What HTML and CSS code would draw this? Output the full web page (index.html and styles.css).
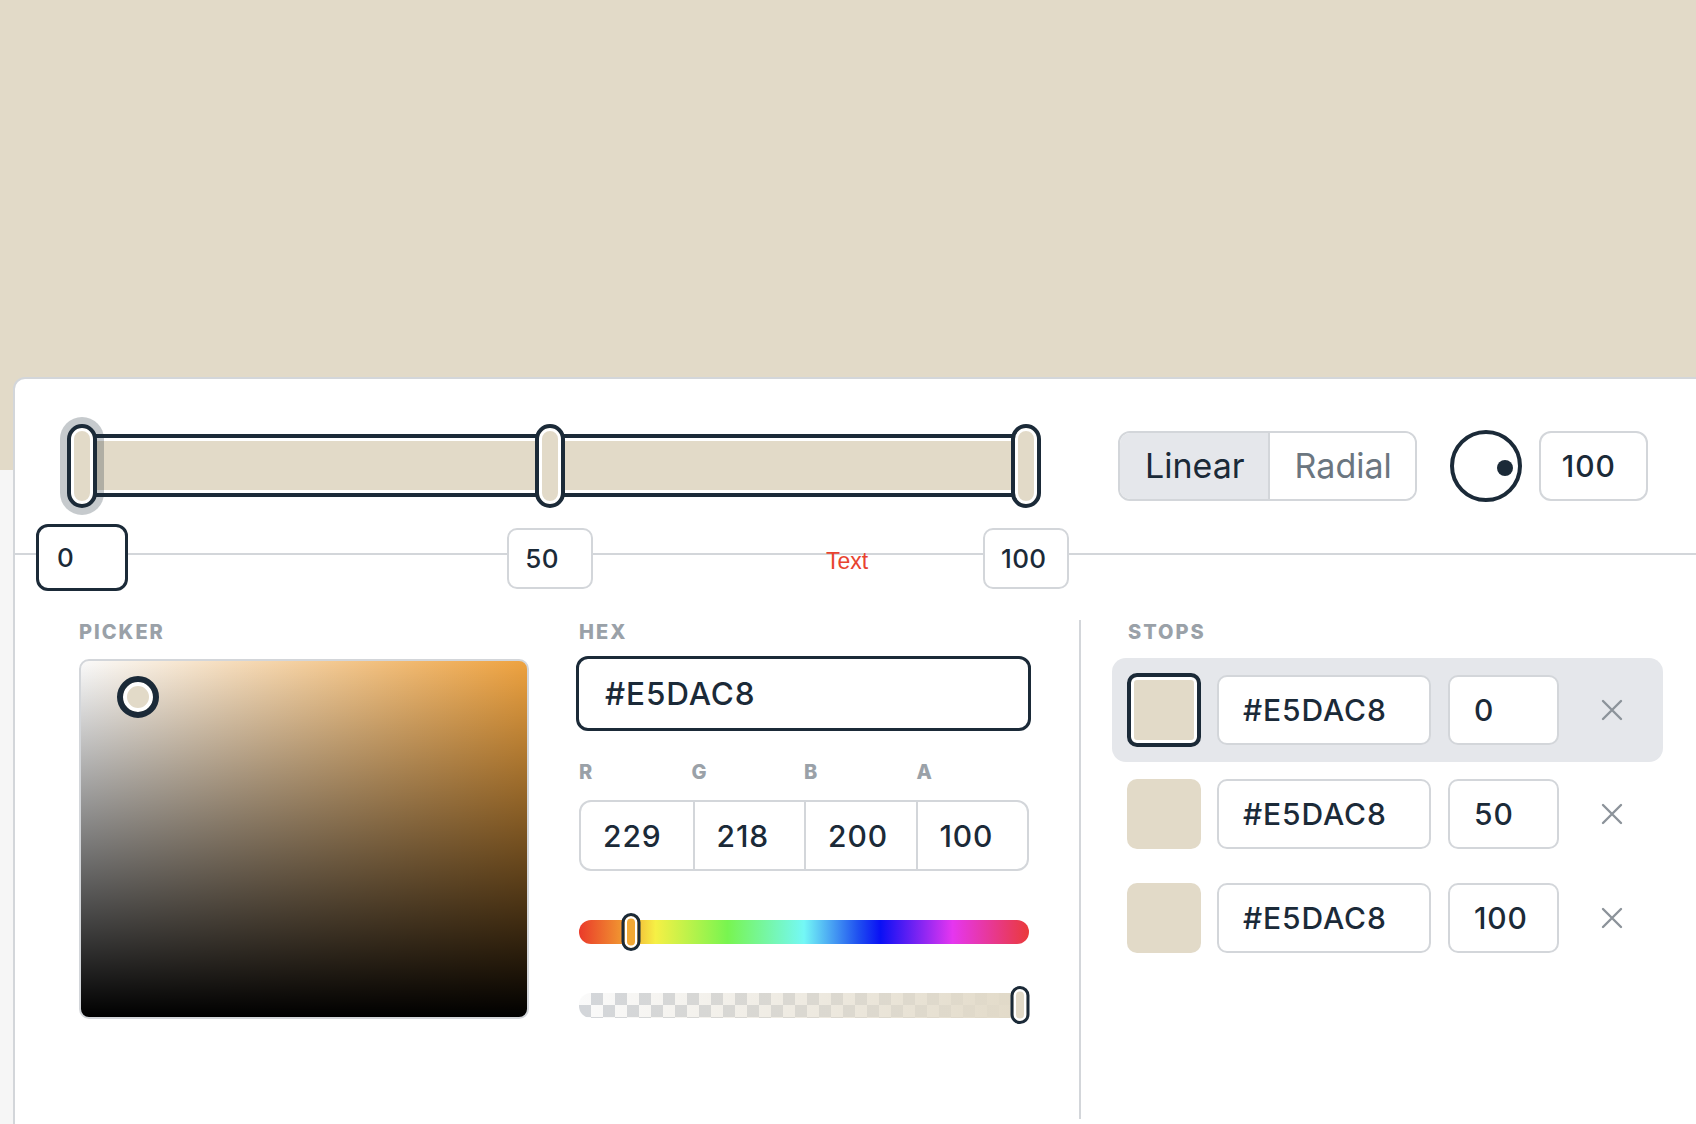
FILE: index.html
```html
<!DOCTYPE html>
<html lang="en">
<head>
<meta charset="utf-8">
<title>Gradient editor</title>
<link rel="stylesheet" href="styles.css">
</head>
<body>
<div class="card">
  <div class="top">
    <div class="editor">
      <div class="track"></div>
      <div class="handle is-focused" style="left:0%"></div>
      <div class="handle" style="left:49.6%"></div>
      <div class="handle" style="left:100%"></div>
      <div class="stop-num is-focused" style="left:0%">0</div>
      <div class="stop-num" style="left:49.6%">50</div>
      <div class="stop-num" style="left:100%">100</div>
      <span class="stray">Text</span>
    </div>
    <div class="seg">
      <div class="seg-item is-active">Linear</div>
      <div class="seg-item">Radial</div>
    </div>
    <div class="dial"><span class="dial-dot"></span></div>
    <div class="field angle">100</div>
  </div>

  <div class="bottom">
    <div class="picker-col">
      <div class="label">PICKER</div>
      <div class="sv">
        <span class="sv-cursor"></span>
      </div>
    </div>

    <div class="mid-col">
      <div class="label indent">HEX</div>
      <div class="hex-input">#E5DAC8</div>
      <div class="rgba-labels">
        <span class="label">R</span>
        <span class="label">G</span>
        <span class="label">B</span>
        <span class="label">A</span>
      </div>
      <div class="rgba">
        <div class="rgba-cell">229</div>
        <div class="rgba-cell">218</div>
        <div class="rgba-cell">200</div>
        <div class="rgba-cell">100</div>
      </div>
      <div class="hue">
        <span class="slider-handle hue-handle" style="left:11.6%"></span>
      </div>
      <div class="alpha">
        <span class="slider-handle alpha-handle" style="left:97.9%"></span>
      </div>
    </div>

    <div class="vdivider"></div>

    <div class="stops-col">
      <div class="label stops-label">STOPS</div>
      <div class="stop-row is-active">
        <div class="swatch is-active"></div>
        <div class="field hex">#E5DAC8</div>
        <div class="field pos">0</div>
        <svg class="remove" width="22" height="22" viewBox="0 0 22 22" fill="none" stroke="#8c939a" stroke-width="2.4" stroke-linecap="round"><path d="M2 2 L20 20 M20 2 L2 20"/></svg>
      </div>
      <div class="stop-row">
        <div class="swatch"></div>
        <div class="field hex">#E5DAC8</div>
        <div class="field pos">50</div>
        <svg class="remove" width="22" height="22" viewBox="0 0 22 22" fill="none" stroke="#8c939a" stroke-width="2.4" stroke-linecap="round"><path d="M2 2 L20 20 M20 2 L2 20"/></svg>
      </div>
      <div class="stop-row">
        <div class="swatch"></div>
        <div class="field hex">#E5DAC8</div>
        <div class="field pos">100</div>
        <svg class="remove" width="22" height="22" viewBox="0 0 22 22" fill="none" stroke="#8c939a" stroke-width="2.4" stroke-linecap="round"><path d="M2 2 L20 20 M20 2 L2 20"/></svg>
      </div>
    </div>
  </div>
</div>
</body>
</html>
```

FILE: styles.css
```css
* { box-sizing: border-box; }

html, body {
  margin: 0;
  padding: 0;
  overflow: hidden;
  height: 1124px;
}

body {
  font-family: Inter, "Noto Sans", sans-serif;
  font-weight: 500;
  color: #1b2a38;
  background: linear-gradient(to bottom, #e2dac8 0, #e2dac8 470px, #f6f6f6 470px, #f6f6f6 100%);
}

.card {
  margin: 377px 0 0 13px;
  width: 1720px;
  background: #fff;
  border: 2px solid #d3d6da;
  border-radius: 12px;
  padding-bottom: 20px;
}

/* ---------- top section ---------- */
.top {
  display: flex;
  align-items: center;
  padding: 45px 0 45px 67px;
  border-bottom: 2px solid #d3d6da;
}

.editor {
  position: relative;
  width: 944px;
  height: 84px;
  flex: none;
}

.track {
  position: absolute;
  left: 0;
  right: 0;
  top: 10px;
  height: 63px;
  background: #e2dac8;
  border: 4px solid #1b2a38;
  box-shadow: inset 0 0 0 3px #fff;
}

.handle {
  position: absolute;
  top: 0;
  width: 30px;
  height: 84px;
  transform: translateX(-50%);
  background: #e2dac8;
  border: 4px solid #1b2a38;
  border-radius: 15px;
  box-shadow: inset 0 0 0 3px #fff;
}

.handle.is-focused {
  box-shadow: inset 0 0 0 3px #fff, 0 0 0 7px rgba(27, 42, 56, 0.25);
}

.stop-num {
  position: absolute;
  top: 104px;
  width: 86px;
  height: 61px;
  transform: translateX(-50%);
  display: flex;
  align-items: center;
  padding-left: 16px;
  background: #fff;
  border: 2px solid #d3d6da;
  border-radius: 10px;
  font-size: 26px;
  letter-spacing: 0.4px;
  line-height: 1;
}

.stop-num.is-focused {
  top: 100px;
  width: 92px;
  height: 67px;
  padding-left: 18px;
  border: 3.5px solid #1b2a38;
  border-radius: 12px;
}

.stray {
  position: absolute;
  left: 744px;
  top: 126px;
  font-family: "Liberation Sans", Arial, sans-serif;
  font-weight: 400;
  font-size: 23px;
  line-height: 23px;
  color: #e8432f;
}

.seg {
  display: flex;
  height: 70px;
  margin-left: 92px;
  border: 2px solid #d3d6da;
  border-radius: 12px;
  overflow: hidden;
  flex: none;
}

.seg-item {
  display: flex;
  align-items: center;
  padding: 0 23px 0 25px;
  font-size: 34px;
  font-weight: 400;
  line-height: 1;
  color: #6b7680;
  background: #fff;
}

.seg-item.is-active {
  background: #e5e7eb;
  color: #1b2a38;
  border-right: 2px solid #d3d6da;
}

.dial {
  position: relative;
  width: 72px;
  height: 72px;
  margin-left: 33px;
  border: 4px solid #1b2a38;
  border-radius: 50%;
  flex: none;
}

.dial-dot {
  position: absolute;
  left: 43px;
  top: 26px;
  width: 16px;
  height: 16px;
  border-radius: 50%;
  background: #1b2a38;
}

.field {
  display: flex;
  align-items: center;
  height: 70px;
  padding-left: 24px;
  background: #fff;
  border: 2px solid #d3d6da;
  border-radius: 10px;
  font-size: 30px;
  letter-spacing: 0.9px;
  line-height: 1;
  flex: none;
}

.angle {
  width: 109px;
  margin-left: 17px;
  padding-left: 21px;
  border-radius: 12px;
}

/* ---------- bottom section ---------- */
.bottom {
  display: flex;
  align-items: flex-start;
  padding: 65px 0 0 64px;
  min-height: 564px;
}

.label {
  font-size: 20px;
  line-height: 24px;
  font-weight: 800;
  letter-spacing: 2px;
  color: #9aa1a8;
}

.label.indent { padding-left: 3px; }

.picker-col {
  width: 450px;
  flex: none;
}

.sv {
  position: relative;
  margin-top: 15px;
  width: 450px;
  height: 360px;
  border: 2px solid #d3d6da;
  border-radius: 10px;
  background:
    linear-gradient(to bottom, rgba(0,0,0,0) 0%, #000 100%),
    linear-gradient(to right, #fafafa 0%, rgba(250,250,250,0) 100%),
    #eea23f;
}

.sv-cursor {
  position: absolute;
  left: 36px;
  top: 15px;
  width: 42px;
  height: 42px;
  border-radius: 50%;
  border: 6px solid #1b2a38;
  background: #e2dac8;
  box-shadow: inset 0 0 0 4px #fff;
}

.mid-col {
  width: 455px;
  margin-left: 47px;
  flex: none;
}

.hex-input {
  display: flex;
  align-items: center;
  margin-top: 12px;
  height: 75px;
  padding-left: 26px;
  border: 3.5px solid #1b2a38;
  border-radius: 12px;
  font-size: 31.5px;
  letter-spacing: 0.9px;
  line-height: 1;
}

.rgba-labels {
  display: grid;
  grid-template-columns: repeat(4, 1fr);
  margin: 29px 0 0 3px;
  width: 450px;
}

.rgba {
  display: grid;
  grid-template-columns: repeat(4, 1fr);
  margin: 16px 0 0 3px;
  width: 450px;
  height: 71px;
  border: 2px solid #d3d6da;
  border-radius: 12px;
  overflow: hidden;
}

.rgba-cell {
  display: flex;
  align-items: center;
  padding-left: 22px;
  font-size: 30px;
  letter-spacing: 0.9px;
  line-height: 1;
  border-left: 2px solid #d3d6da;
}

.rgba-cell:first-child { border-left: 0; }

.hue {
  position: relative;
  margin: 49px 0 0 3px;
  width: 450px;
  height: 24px;
  border-radius: 12px;
  background: linear-gradient(to right,
    #ea3a2a 0%, #f09030 9%, #f6f045 17%, #78f550 33%, #74f8f6 50%,
    #1f50f0 62%, #0a10f5 67%, #e536f0 83%, #ea3a3a 100%);
}

.alpha {
  position: relative;
  margin: 49px 0 0 3px;
  width: 450px;
  height: 25px;
  border-radius: 12px;
  background:
    linear-gradient(to right, rgba(226,218,200,0) 0%, #e2dac8 100%),
    conic-gradient(#d3d6da 25%, #fafafa 0 50%, #d3d6da 0 75%, #fafafa 0) 0 0 / 24px 24px;
}

.slider-handle {
  position: absolute;
  top: -7px;
  width: 19px;
  height: 38px;
  transform: translateX(-50%);
  border: 3.5px solid #1b2a38;
  border-radius: 10px;
  box-shadow: inset 0 0 0 2.5px #fff;
}

.hue-handle { background: #f2a834; }

.alpha-handle { background: #e2dac8; }

.vdivider {
  align-self: stretch;
  width: 2px;
  margin-left: 48px;
  background: #d3d6da;
  flex: none;
  height: 499px;
}

.stops-col {
  width: 551px;
  margin-left: 31px;
  flex: none;
}

.stops-label {
  padding-left: 16px;
  margin-bottom: 14px;
}

.stop-row {
  display: flex;
  align-items: center;
  height: 104px;
  padding: 0 15px;
  border-radius: 14px;
}

.stop-row.is-active { background: #e5e7eb; }

.swatch {
  width: 74px;
  height: 70px;
  border-radius: 10px;
  background: #e2dac8;
  flex: none;
}

.swatch.is-active {
  height: 74px;
  border: 4px solid #1b2a38;
  box-shadow: inset 0 0 0 3px #fff;
}

.field.hex {
  width: 214px;
  margin-left: 16px;
}

.field.pos {
  width: 111px;
  margin-left: 17px;
}

.remove {
  margin-left: 42px;
  flex: none;
}
```
